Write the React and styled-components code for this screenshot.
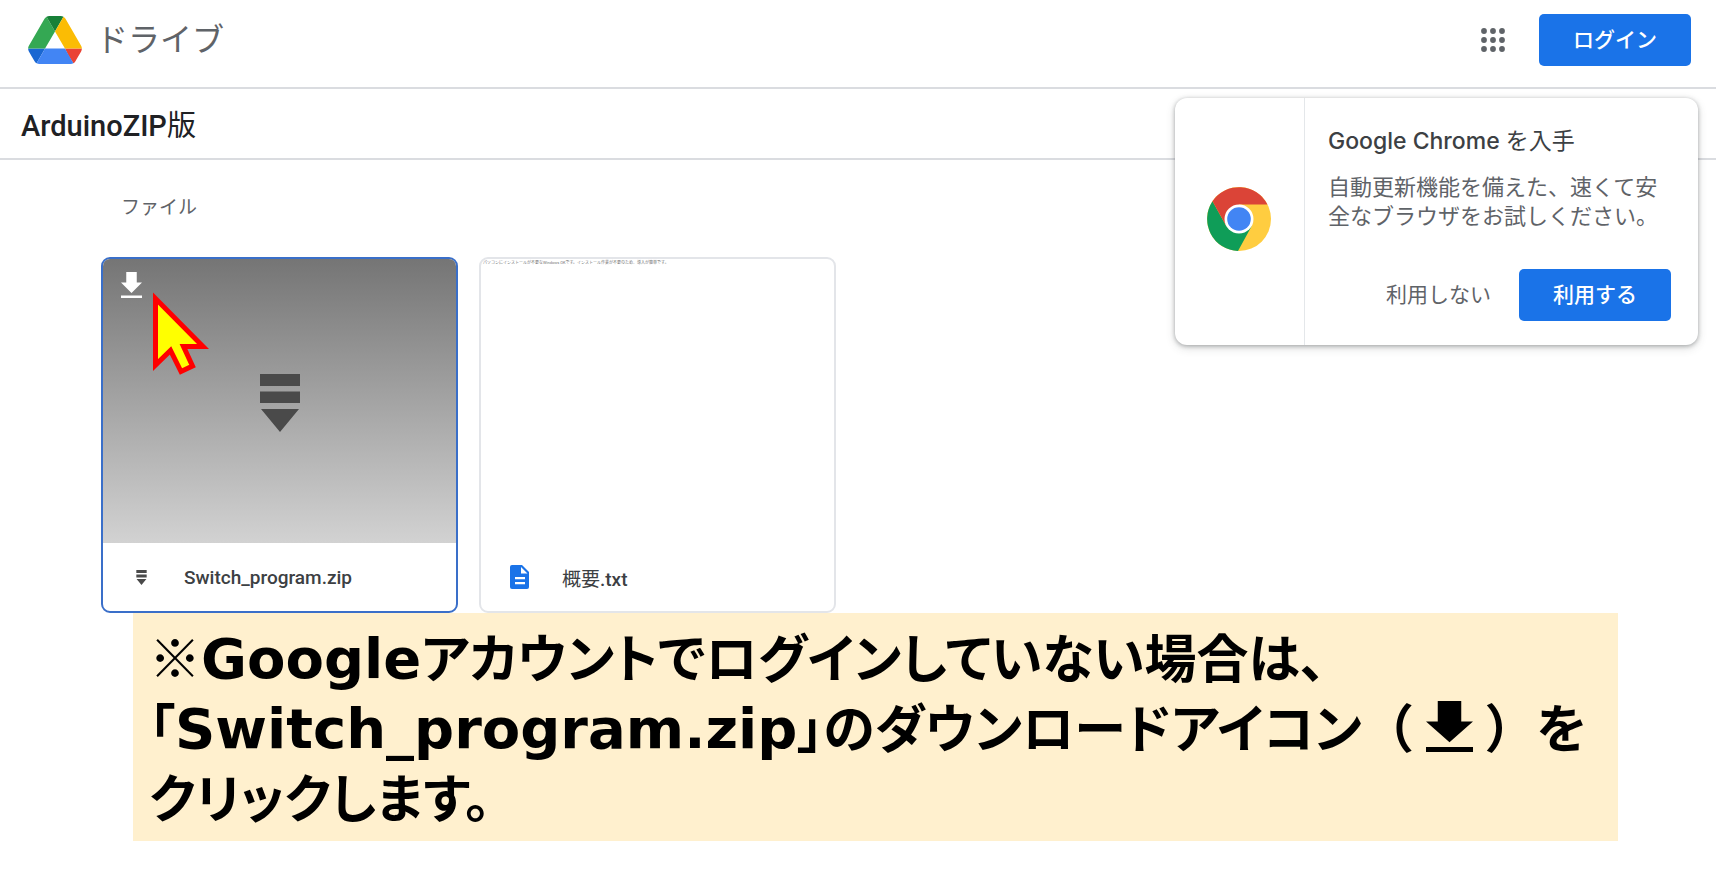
import React from "react";
import styled, { createGlobalStyle } from "styled-components";

const colors = {
  primary: "#1a73e8",
  text: "#202124",
  textLight: "#5f6368",
  line: "#dadce0",
  note: "#fff0ce",
};

const GlobalStyle = createGlobalStyle`
  * {
    box-sizing: border-box;
  }
  body {
    margin: 0;
    background: #ffffff;
    color: ${colors.text};
    font-family: Roboto, "Noto Sans CJK JP", sans-serif;
  }
  h1, h2, p {
    margin: 0;
  }
`;

const Page = styled.div`
  position: relative;
`;

const Header = styled.header`
  display: flex;
  align-items: center;
  justify-content: space-between;
  height: 89px;
  padding: 0 25px 8px 28px;
  border-bottom: 2px solid ${colors.line};
`;

const Brand = styled.a`
  display: flex;
  align-items: center;
  gap: 14px;
  color: ${colors.textLight};
  font-size: 32px;
  line-height: 40px;
  text-decoration: none;
`;

const HeaderActions = styled.div`
  display: flex;
  align-items: center;
  gap: 26px;
`;

const IconButton = styled.button`
  display: flex;
  padding: 8px;
  border: none;
  background: none;
  color: ${colors.textLight};
  cursor: pointer;
`;

const Button = styled.button`
  min-width: ${(props) => (props.$primary ? "152px" : "0")};
  height: 52px;
  padding: 0 8px 4px;
  border: none;
  border-radius: 5px;
  background: ${(props) => (props.$primary ? colors.primary : "none")};
  color: ${(props) => (props.$primary ? "#ffffff" : colors.textLight)};
  font-family: inherit;
  font-size: 21px;
  font-weight: ${(props) => (props.$primary ? 500 : 400)};
  cursor: pointer;
`;

const FolderBar = styled.div`
  display: flex;
  align-items: center;
  height: 71px;
  padding: 4px 21px 0;
  border-bottom: 2px solid ${colors.line};
`;

const FolderTitle = styled.h1`
  font-size: 29px;
  font-weight: 500;
  line-height: 40px;
`;

const Thin = styled.span`
  font-weight: 400;
`;

const SectionTitle = styled.h2`
  padding: 32px 0 33px 121px;
  color: ${colors.textLight};
  font-size: 19px;
  font-weight: 400;
  line-height: 32px;
`;

const FileGrid = styled.div`
  display: grid;
  grid-template-columns: repeat(auto-fill, 357px);
  gap: 21px;
  padding: 0 101px;
`;

const Card = styled.article`
  display: flex;
  flex-direction: column;
  height: 356px;
  overflow: hidden;
  border: 2px solid ${(props) => (props.$selected ? "#3a6fc9" : "#e3e5e9")};
  border-radius: 9px;
`;

const Preview = styled.div`
  position: relative;
  display: flex;
  flex: 1;
  align-items: center;
  justify-content: center;
  padding-top: 4px;
  background: linear-gradient(#757575, #d2d2d2);
`;

const TextPreview = styled.div`
  flex: 1;
  padding: 1px 2px;
  color: #777777;
  font-size: 4px;
  line-height: 5px;
  white-space: nowrap;
`;

const DownloadButton = styled.button`
  position: absolute;
  top: 13px;
  left: 18px;
  display: flex;
  padding: 0;
  border: none;
  background: none;
  color: #ffffff;
  cursor: pointer;
`;

const Pointer = styled.svg`
  position: absolute;
  top: 33px;
  left: 50px;
`;

const FileName = styled.div`
  display: flex;
  align-items: center;
  gap: 28px;
  height: 68px;
  padding-left: 24px;
  color: #3c4043;
  font-size: 19px;
  font-weight: 500;
`;

const Note = styled.p`
  margin: 0 98px 0 133px;
  padding: 8px 16px 10px;
  background: ${colors.note};
  color: #000000;
  font-family: "Noto Sans CJK JP", sans-serif;
  font-size: 52px;
  font-weight: 700;
  line-height: 70px;
  font-feature-settings: "palt";

  & svg {
    vertical-align: -4px;
  }
`;

const Latin = styled.span`
  font-family: "DejaVu Sans", sans-serif;
  font-size: 56px;
  line-height: 1;
`;

const FullWidth = styled.span`
  font-feature-settings: normal;
`;

const Promo = styled.aside`
  position: absolute;
  top: 98px;
  right: 18px;
  display: flex;
  width: 523px;
  height: 247px;
  border-radius: 12px;
  background: #ffffff;
  box-shadow: 0 1px 4px rgba(60, 64, 67, 0.4), 0 3px 10px rgba(60, 64, 67, 0.18);
`;

const PromoLogo = styled.div`
  display: flex;
  align-items: center;
  justify-content: center;
  width: 130px;
  padding: 0 2px 6px 0;
  border-right: 1px solid #e4e7ea;
`;

const PromoContent = styled.div`
  display: flex;
  flex: 1;
  flex-direction: column;
  padding: 28px 27px 24px 23px;
  color: ${colors.textLight};
`;

const PromoTitle = styled.h2`
  color: #3c4043;
  font-family: Inter, "Noto Sans CJK JP", sans-serif;
  font-size: 23px;
  font-weight: 500;
  line-height: 30px;
`;

const PromoText = styled.p`
  width: 336px;
  margin: 17px 0 auto;
  font-size: 22px;
  line-height: 29px;
`;

const PromoActions = styled.div`
  display: flex;
  justify-content: flex-end;
  gap: 20px;
`;

const DriveLogo = () => (
  <svg width="54" height="48" viewBox="0 0 87.3 78" aria-hidden="true">
    <path d="m6.6 66.85 3.85 6.65c.8 1.4 1.95 2.5 3.3 3.3l13.75-23.8h-27.5c0 1.55.4 3.1 1.2 4.5z" fill="#1967d2" />
    <path d="m43.65 25-13.75-23.8c-1.35.8-2.5 1.9-3.3 3.3l-25.4 44a9.06 9.06 0 0 0 -1.2 4.5h27.5z" fill="#34a853" />
    <path d="m73.55 76.8c1.35-.8 2.5-1.9 3.3-3.3l1.6-2.75 7.65-13.25c.8-1.4 1.2-2.95 1.2-4.5h-27.5l5.85 11.5z" fill="#ea4335" />
    <path d="m43.65 25 13.75-23.8c-1.35-.8-2.9-1.2-4.5-1.2h-18.5c-1.6 0-3.15.45-4.5 1.2z" fill="#188038" />
    <path d="m59.8 53h-32.3l-13.75 23.8c1.35.8 2.9 1.2 4.5 1.2h50.8c1.6 0 3.15-.45 4.5-1.2z" fill="#4285f4" />
    <path d="m73.4 26.5-12.7-22c-.8-1.4-1.95-2.5-3.3-3.3l-13.75 23.8 16.15 28h27.45c0-1.55-.4-3.1-1.2-4.5z" fill="#fbbc04" />
  </svg>
);

const AppsIcon = () => (
  <svg width="24" height="24" viewBox="0 0 24 24" fill="currentColor" aria-hidden="true">
    {[3, 12, 21].map((y) =>
      [3, 12, 21].map((x) => <circle key={`${x}-${y}`} cx={x} cy={y} r="2.9" />)
    )}
  </svg>
);

const ChromeLogo = () => (
  <svg width="64" height="64" viewBox="0 0 64 64" aria-hidden="true">
    <circle cx="32" cy="32" r="32" fill="#ffcd40" />
    <path d="M5.500 14.300A32 32 0 0 0 31 64L44.600 39.300L32 40L19.400 39.300Z" fill="#0f9d58" />
    <path d="M5.500 14.300A32 32 0 0 1 60.500 17.500H32V32L19.400 39.300Z" fill="#db4437" />
    <circle cx="32" cy="32" r="14.5" fill="#ffffff" />
    <circle cx="32" cy="32" r="11.8" fill="#4285f4" />
  </svg>
);

const DownloadIcon = ({ width, height }) => (
  <svg width={width} height={height} viewBox="0 0 48 52" preserveAspectRatio="none" fill="currentColor" aria-hidden="true">
    <path d="M12 0h24v21h12L24 42 0 21h12zM0 47h48v5H0z" />
  </svg>
);

const ArchiveIcon = ({ width, height }) => (
  <svg width={width} height={height} viewBox="0 0 40 58" fill="#4a4a4a" aria-hidden="true">
    <path d="M0 0h40v12H0zM0 17.500h40v11.500H0zM1 35h38L20 58z" />
  </svg>
);

const DocIcon = () => (
  <svg width="19" height="24" viewBox="0 0 19 24" aria-hidden="true">
    <path d="M2 0h10l7 7v15a2 2 0 0 1-2 2H2a2 2 0 0 1-2-2V2a2 2 0 0 1 2-2z" fill={colors.primary} />
    <path d="M11 2v6.500h6.500zM5 12h10v2.200H5zM5 17h10v2.200H5z" fill="#ffffff" />
  </svg>
);

const IconSlot = styled.span`
  display: flex;
  justify-content: center;
  width: 29px;
`;

const App = () => {
  return (
    <Page>
      <GlobalStyle />
      <Header>
        <Brand href="#">
          <DriveLogo />
          ドライブ
        </Brand>
        <HeaderActions>
          <IconButton aria-label="アプリ">
            <AppsIcon />
          </IconButton>
          <Button $primary>ログイン</Button>
        </HeaderActions>
      </Header>

      <FolderBar>
        <FolderTitle>
          ArduinoZIP<Thin>版</Thin>
        </FolderTitle>
      </FolderBar>

      <main>
        <SectionTitle>ファイル</SectionTitle>
        <FileGrid>
          <Card $selected>
            <Preview>
              <DownloadButton aria-label="ダウンロード">
                <DownloadIcon width={21} height={26} />
              </DownloadButton>
              <ArchiveIcon width={40} height={58} />
              <Pointer width="56" height="84" viewBox="0 0 56 84" aria-hidden="true">
                <path
                  d="M2.500 6.500V73L17.500 58.500L28 79.500L39.500 74L30.500 54.500L50 54.500Z"
                  fill="#ffff00"
                  stroke="#ff0000"
                  strokeWidth="5"
                />
              </Pointer>
            </Preview>
            <FileName>
              <IconSlot>
                <ArchiveIcon width={11} height={15} />
              </IconSlot>
              Switch_program.zip
            </FileName>
          </Card>
          <Card>
            <TextPreview>
              パソコンにインストールが不要なWindows OKです。インストール作業が不要のため、導入が簡単です。
            </TextPreview>
            <FileName>
              <IconSlot>
                <DocIcon />
              </IconSlot>
              <span>
                <Thin>概要</Thin>.txt
              </span>
            </FileName>
          </Card>
        </FileGrid>
        <Note>
          ※<Latin>Google</Latin>アカウントでログインしていない場合は、
          <br />
          「<Latin>Switch_program.zip</Latin>」のダウンロードアイコン
          <FullWidth>
            （ <DownloadIcon width={47} height={51} /> ）
          </FullWidth>
          を
          <br />
          クリックします。
        </Note>
      </main>

      <Promo>
        <PromoLogo>
          <ChromeLogo />
        </PromoLogo>
        <PromoContent>
          <PromoTitle>
            Google Chrome <Thin>を入手</Thin>
          </PromoTitle>
          <PromoText>自動更新機能を備えた、速くて安全なブラウザをお試しください。</PromoText>
          <PromoActions>
            <Button>利用しない</Button>
            <Button $primary>利用する</Button>
          </PromoActions>
        </PromoContent>
      </Promo>
    </Page>
  );
};

export default App;
